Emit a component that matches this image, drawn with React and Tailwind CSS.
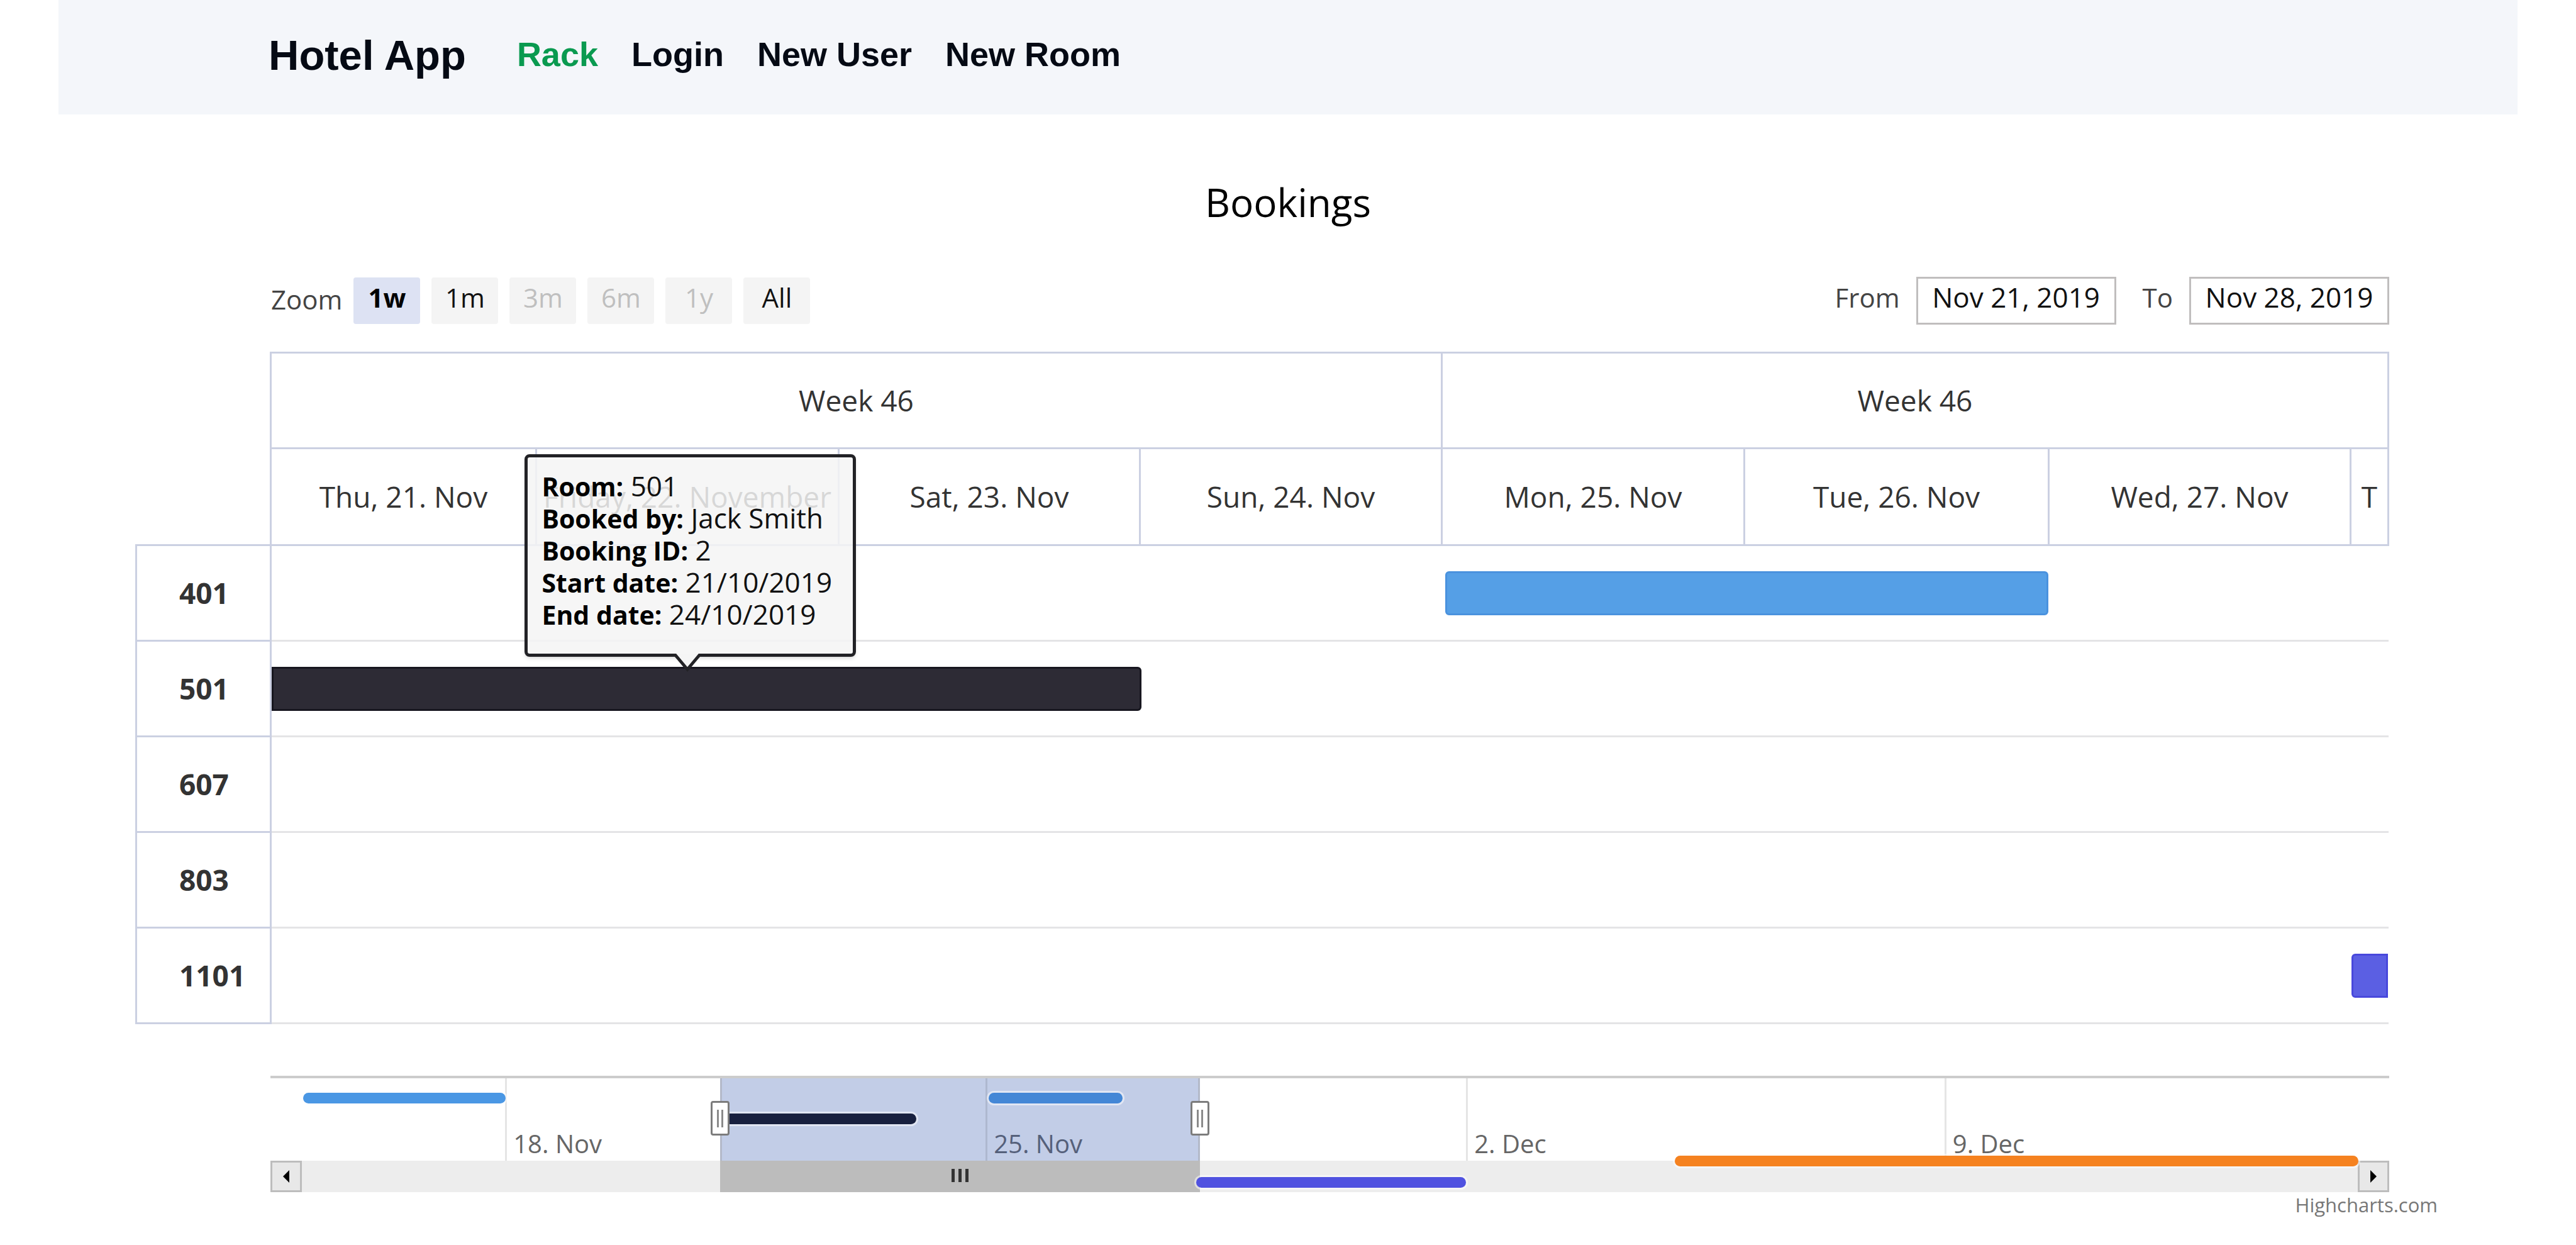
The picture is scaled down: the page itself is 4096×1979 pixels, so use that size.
const NAV_LINKS = [
  { label: "Rack", active: true },
  { label: "Login" },
  { label: "New User" },
  { label: "New Room" },
];

const RANGES = [
  { label: "1w", state: "active" },
  { label: "1m", state: "normal" },
  { label: "3m", state: "disabled" },
  { label: "6m", state: "disabled" },
  { label: "1y", state: "disabled" },
  { label: "All", state: "normal" },
];

const RANGE_STYLE = {
  active: "bg-[#dde2f3] font-bold text-black",
  normal: "bg-[#f4f4f4] text-[#111111]",
  disabled: "bg-[#f4f4f4] text-[#bfbfbf]",
};

// Relative widths: the room column first, then one entry per visible day.
const COLUMNS = [214, 422, 481, 479, 480, 481, 484, 480, 60];
const COLUMN_TOTAL = COLUMNS.reduce((sum, width) => sum + width, 0);
const PLOT_TOTAL = COLUMN_TOTAL - COLUMNS[0];

const DAYS = [
  "Thu, 21. Nov",
  "Friday, 22. November",
  "Sat, 23. Nov",
  "Sun, 24. Nov",
  "Mon, 25. Nov",
  "Tue, 26. Nov",
  "Wed, 27. Nov",
  "T",
];

const ROOMS = [
  { room: "401", bar: { start: 1867, end: 2826, style: "rounded-md border-[#4a92de] bg-[#559fe6]" } },
  { room: "501", bar: { start: 0, end: 1384, style: "rounded-r-md border-[#17161f] bg-[#2d2b35]", tooltip: true } },
  { room: "607" },
  { room: "803" },
  { room: "1101", bar: { start: 3308, end: PLOT_TOTAL, style: "rounded-l-md border-[#4848dc] bg-[#5b5fe3]" } },
];

const BOOKING = [
  ["Room", "501"],
  ["Booked by", "Jack Smith"],
  ["Booking ID", "2"],
  ["Start date", "21/10/2019"],
  ["End date", "24/10/2019"],
];

// The overview is laid out in November days (32 is 2 December).
const FIRST_DAY = 14.58;
const DAY_SPAN = 30.87;
const at = (day) => `${((day - FIRST_DAY) / DAY_SPAN) * 100}%`;
const span = (from, to) => `${((to - from) / DAY_SPAN) * 100}%`;

const WINDOW = { from: 21.13, to: 28.12 };

const TICKS = [
  { day: 18, label: "18. Nov", style: "text-[#666666]" },
  { day: 25, label: "25. Nov", style: "text-[#55607a]" },
  { day: 32, label: "2. Dec", style: "text-[#666666]" },
  { day: 38.97, label: "9. Dec", style: "text-[#666666]" },
];

const SERIES = [
  { from: 15.06, to: 18.01, style: "top-[23px] bg-[#4a97e4]" },
  { from: 21.13, to: 23.99, style: "top-[56px] bg-[#18203f]" },
  { from: 25.04, to: 27, style: "top-[23px] bg-[#4487d6]" },
  { from: 28.07, to: 32, style: "top-[157px] bg-[#5052e0]" },
  { from: 35.04, to: 45, style: "top-[123px] bg-[#f58220]" },
];

function Header() {
  return (
    <header className="mx-[93px] flex h-[182px] items-start gap-[81px] bg-[#f4f6fa] pt-[46px] pl-[334px] font-['Liberation_Sans',sans-serif] font-bold text-[#050a14]">
      <a href="#" className="text-[67px] leading-[84px]">Hotel App</a>
      <nav className="flex gap-[53px] text-[54px] leading-[80px]">
        {NAV_LINKS.map((link) => (
          <a key={link.label} href="#" className={link.active ? "text-[#0a9a50]" : ""}>
            {link.label}
          </a>
        ))}
      </nav>
    </header>
  );
}

function DateField({ id, label, value }) {
  return (
    <div className="flex items-center gap-[26px]">
      <label htmlFor={id} className="pb-3 text-[#444444]">{label}</label>
      <input
        id={id}
        type="text"
        defaultValue={value}
        className="h-[76px] w-[318px] border-[3px] border-[#c0bebe] bg-white pb-3 text-center text-[44px] text-[#111111]"
      />
    </div>
  );
}

function Toolbar() {
  return (
    <div className="ml-[216px] flex h-[76px] items-center justify-between text-[42px]">
      <div className="flex items-center gap-[18px]">
        <span className="pb-1.5 text-[#444444]">Zoom</span>
        {RANGES.map((range) => (
          <button
            key={range.label}
            type="button"
            disabled={range.state === "disabled"}
            className={`flex h-[74px] w-[106px] items-center justify-center rounded-sm pb-3 ${RANGE_STYLE[range.state]}`}
          >
            {range.label}
          </button>
        ))}
      </div>
      <div className="flex items-center gap-[42px]">
        <DateField id="from" label="From" value="Nov 21, 2019" />
        <DateField id="to" label="To" value="Nov 28, 2019" />
      </div>
    </div>
  );
}

function Tooltip() {
  return (
    <div
      role="tooltip"
      className="absolute bottom-full left-[29%] z-10 mb-[19px] w-[527px] rounded-lg border-[5px] border-[#222226] bg-[#f5f5f5]/85 px-[22px] pt-[20px] pb-[37px] shadow-md"
    >
      {BOOKING.map(([label, value]) => (
        <p key={label} className="text-[44px] leading-[51px] whitespace-nowrap text-[#111111]">
          <b className="text-[41px] leading-none text-black">{label}:</b> {value}
        </p>
      ))}
      <svg viewBox="0 0 44 32" className="absolute top-full left-[49%] h-[32px] w-[44px] -translate-x-1/2">
        <path d="M2 0 L22 24 L42 0 Z" fill="#f5f5f5" />
        <path d="M0 2.5 H3 L22 25 L41 2.5 H44" fill="none" stroke="#222226" strokeWidth="5" />
      </svg>
    </div>
  );
}

function Bar({ bar }) {
  return (
    <div
      className={`relative h-[70px] border-[3px] ${bar.style}`}
      style={{
        marginLeft: `${(bar.start / PLOT_TOTAL) * 100}%`,
        width: `${((bar.end - bar.start) / PLOT_TOTAL) * 100}%`,
      }}
    >
      {bar.tooltip && <Tooltip />}
    </div>
  );
}

function Schedule() {
  return (
    <table className="mt-[43px] w-full table-fixed border-collapse text-[46px] text-[#333333]">
      <colgroup>
        {COLUMNS.map((width, i) => (
          <col key={i} style={{ width: `${(width / COLUMN_TOTAL) * 100}%` }} />
        ))}
      </colgroup>
      <thead>
        <tr className="h-[152px]">
          <td />
          <th colSpan={4} className="border-[3px] border-[#cbd0e2] p-0 font-normal">Week 46</th>
          <th colSpan={4} className="border-[3px] border-[#cbd0e2] p-0 font-normal">Week 46</th>
        </tr>
        <tr className="h-[154px]">
          <td />
          {DAYS.map((day) => (
            <th key={day} className="border-[3px] border-[#cbd0e2] p-0 font-normal whitespace-nowrap">
              {day}
            </th>
          ))}
        </tr>
      </thead>
      <tbody>
        {ROOMS.map(({ room, bar }) => (
          <tr key={room} className="h-[152px]">
            <th className="border-[3px] border-[#cbd0e2] p-0 pl-[67px] text-left font-bold">{room}</th>
            <td colSpan={8} className="border-b-[3px] border-[#e4e4e6] p-0">
              {bar && <Bar bar={bar} />}
            </td>
          </tr>
        ))}
      </tbody>
    </table>
  );
}

function Handle({ day }) {
  return (
    <button
      type="button"
      aria-label="Resize range"
      className="absolute top-[36px] flex h-[55px] w-[30px] -translate-x-1/2 items-center justify-center gap-1 rounded-sm border-[3px] border-[#7c7c7c] bg-white"
      style={{ left: at(day) }}
    >
      <span className="h-[28px] w-[3px] bg-[#8a8a8a]" />
      <span className="h-[28px] w-[3px] bg-[#8a8a8a]" />
    </button>
  );
}

function ScrollButton({ label, path }) {
  return (
    <button
      type="button"
      aria-label={label}
      className="flex h-[50px] w-[50px] items-center justify-center border-[3px] border-[#bdbdbd] bg-[#e8e8e8]"
    >
      <svg viewBox="0 0 10 20" className="h-[20px] w-[10px]">
        <path d={path} fill="black" />
      </svg>
    </button>
  );
}

function Navigator() {
  return (
    <div className="relative mt-[82px] ml-[215px] border-t-4 border-[#cccccc]">
      <div className="relative h-[131px]">
        <div
          className="absolute inset-y-0 border-x-[3px] border-[#b3b9c9] bg-[#c2cde7]"
          style={{ left: at(WINDOW.from), width: span(WINDOW.from, WINDOW.to) }}
        />
        {TICKS.map((tick) => (
          <div
            key={tick.label}
            className={`absolute inset-y-0 flex items-end border-l-[3px] border-black/10 pb-0.5 pl-[10px] text-[40px] leading-[50px] ${tick.style}`}
            style={{ left: at(tick.day) }}
          >
            {tick.label}
          </div>
        ))}
      </div>
      <div className="relative flex justify-between bg-[#ededed]">
        <ScrollButton label="Scroll left" path="M10 0 V20 L0 10 Z" />
        <div
          className="absolute inset-y-0 flex items-center justify-center gap-[6px] bg-[#bcbcbc] pb-1"
          style={{ left: at(WINDOW.from), width: span(WINDOW.from, WINDOW.to) }}
        >
          <span className="h-[21px] w-[5px] bg-[#333333]" />
          <span className="h-[21px] w-[5px] bg-[#333333]" />
          <span className="h-[21px] w-[5px] bg-[#333333]" />
        </div>
        <ScrollButton label="Scroll right" path="M0 0 V20 L10 10 Z" />
      </div>
      {SERIES.map((bar) => (
        <div
          key={bar.from}
          className={`absolute h-[17px] rounded-full ring-3 ring-white/50 ${bar.style}`}
          style={{ left: at(bar.from), width: span(bar.from, bar.to) }}
        />
      ))}
      <Handle day={WINDOW.from} />
      <Handle day={WINDOW.to} />
    </div>
  );
}

export default function App() {
  return (
    <div className="min-h-screen bg-white font-['Open_Sans',sans-serif]">
      <Header />
      <h1 className="mt-[99px] mb-[79px] text-center text-[62px] leading-[80px] text-black">Bookings</h1>
      <main className="mr-[297px] ml-[215px]">
        <Toolbar />
        <Schedule />
        <Navigator />
      </main>
      <footer className="pr-[220px] text-right text-[31px] leading-[40px] text-[#777777]">
        <a href="#">Highcharts.com</a>
      </footer>
    </div>
  );
}
